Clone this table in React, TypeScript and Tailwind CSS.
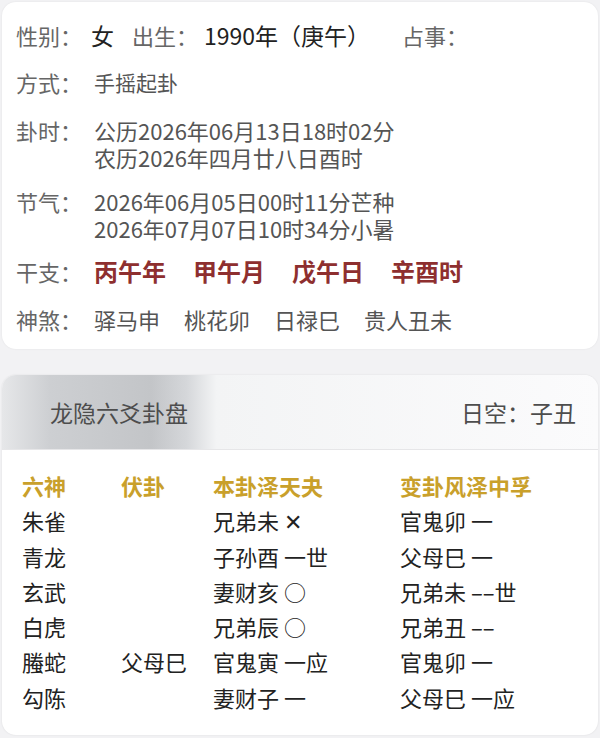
import React from 'react';

const font = { fontFamily: '"Noto Sans CJK SC", "Noto Sans", sans-serif' };

const ganzhi = ['丙午年', '甲午月', '戊午日', '辛酉时'];
const shensha = ['驿马申', '桃花卯', '日禄巳', '贵人丑未'];

const rows = [
  { shen: '朱雀', fu: '', ben: '兄弟未 ✕', bian: '官鬼卯 一' },
  { shen: '青龙', fu: '', ben: '子孙酉 一世', bian: '父母巳 一' },
  { shen: '玄武', fu: '', ben: '妻财亥 ○', bian: '兄弟未 ––世' },
  { shen: '白虎', fu: '', ben: '兄弟辰 ○', bian: '兄弟丑 ––' },
  { shen: '螣蛇', fu: '父母巳', ben: '官鬼寅 一应', bian: '官鬼卯 一' },
  { shen: '勾陈', fu: '', ben: '妻财子 一', bian: '父母巳 一应' },
];

const Label = ({ children }: { children: React.ReactNode }) => (
  <span className="w-[78px] shrink-0 text-[22px] text-[#666]">{children}</span>
);

const App = () => {
  return (
    <div className="min-h-[738px] w-[600px] bg-[#f2f2f4] px-[2px] pt-[2px]" style={font}>
      <div className="rounded-[14px] bg-white pl-[14px] pt-[19px] pb-[16px] shadow-[0_0_2px_rgba(0,0,0,0.08)]">
        <div className="flex items-center leading-[28px]">
          <span className="w-[75px] shrink-0 text-[22px] text-[#666]">性别：</span>
          <span className="text-[23px] text-[#222]">女</span>
          <span className="ml-[18px] text-[22px] text-[#666]">出生：</span>
          <span className="ml-[6px] text-[23px] text-[#222]">1990年（庚午）</span>
          <span className="ml-[32px] text-[22px] text-[#666]">占事：</span>
        </div>
        <div className="mt-[19px] flex items-center leading-[28px]">
          <Label>方式：</Label>
          <span className="text-[21px] text-[#555]">手摇起卦</span>
        </div>
        <div className="mt-[21px] flex leading-[27px]">
          <Label>卦时：</Label>
          <div className="flex flex-col text-[22px] text-[#555]">
            <span>公历2026年06月13日18时02分</span>
            <span>农历2026年四月廿八日酉时</span>
          </div>
        </div>
        <div className="mt-[17px] flex leading-[27px]">
          <Label>节气：</Label>
          <div className="flex flex-col text-[22px] text-[#555]">
            <span>2026年06月05日00时11分芒种</span>
            <span>2026年07月07日10时34分小暑</span>
          </div>
        </div>
        <div className="mt-[15px] flex items-center leading-[28px]">
          <Label>干支：</Label>
          <div className="flex gap-[27px] text-[24px] font-bold text-[#8e2f2f]">
            {ganzhi.map((g) => (
              <span key={g}>{g}</span>
            ))}
          </div>
        </div>
        <div className="mt-[20px] flex items-center leading-[28px]">
          <Label>神煞：</Label>
          <div className="flex gap-[24px] text-[22px] text-[#555]">
            {shensha.map((s) => (
              <span key={s}>{s}</span>
            ))}
          </div>
        </div>
      </div>

      <div className="mt-[26px] overflow-hidden rounded-[14px] bg-white shadow-[0_0_2px_rgba(0,0,0,0.1)]">
        <div className="flex h-[75px] items-center justify-between border-b border-[#e6e6e8] bg-[linear-gradient(90deg,#e6e7e9_0%,#cdcfd2_8%,#c3c5c8_25%,#d5d7da_31%,#f3f4f5_36%,#fbfbfc_100%)] pl-[48px] pr-[22px]">
          <span className="text-[23px] text-[#4d4d4d]">龙隐六爻卦盘</span>
          <span className="text-[23px] text-[#4d4d4d]">日空：子丑</span>
        </div>
        <div className="pl-[20px] pt-[18px] pb-[20px] text-[22px] leading-[35.3px]">
          <div className="grid grid-cols-[99px_92px_187px_1fr] font-bold text-[#c9a02b]">
            <span>六神</span>
            <span>伏卦</span>
            <span>本卦泽天夬</span>
            <span>变卦风泽中孚</span>
          </div>
          {rows.map((r) => (
            <div key={r.shen} className="grid grid-cols-[99px_92px_187px_1fr] text-[#222]">
              <span>{r.shen}</span>
              <span>{r.fu}</span>
              <span>{r.ben}</span>
              <span>{r.bian}</span>
            </div>
          ))}
        </div>
      </div>
    </div>
  );
};

export default App;
